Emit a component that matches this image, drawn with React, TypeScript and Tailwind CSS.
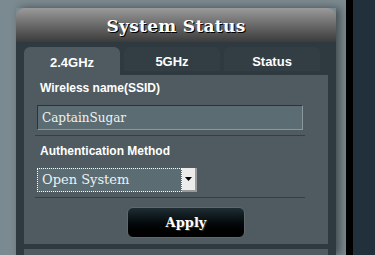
export default function App() {
  const serif = { fontFamily: '"DejaVu Serif", "Liberation Serif", serif' };
  return (
    <div className="flex h-[255px] w-[375px] overflow-hidden bg-[#7b8a90]" style={{ fontFamily: '"Liberation Sans", Arial, sans-serif' }}>
      <div className="w-[346px] shrink-0 pl-[16px] pt-[8px]">
        <div className="w-[320px] shadow-[4px_0_8px_rgba(0,0,0,0.45)]">
          {/* header */}
          <div className="flex h-[34px] items-center justify-center rounded-t-[9px] bg-gradient-to-b from-[#9b9b9b] to-[#3c3c3c] pt-[3px]">
            <span className="text-[17px] font-bold tracking-[0.3px] text-white [text-shadow:1px_1px_0_#000]" style={serif}>
              System Status
            </span>
          </div>
          {/* body */}
          <div className="h-[213px] bg-[#2e3a3f] px-[8px] pt-[5px]">
            <div className="flex gap-[4px]">
              <div className="flex h-[28px] w-[96px] items-center justify-center rounded-t-[6px] bg-[#4f5b60] pt-[3px] text-[13px] font-bold text-white">
                2.4GHz
              </div>
              <div className="flex h-[24px] w-[96px] items-center justify-center rounded-t-[6px] bg-[#323e44] pt-[6px] text-[13px] font-bold text-white">
                5GHz
              </div>
              <div className="flex h-[24px] w-[96px] items-center justify-center rounded-t-[6px] bg-[#323e44] pt-[6px] text-[13px] font-bold text-white">
                Status
              </div>
            </div>
            <div className="h-[169px] bg-[#4f5b60] px-[11px] pt-[6px]">
              <div className="pl-[5px] text-[12px] font-bold leading-[15px] text-white">Wireless name(SSID)</div>
              <div className="mt-[9px] px-[2px]">
                <div className="flex h-[25px] w-[266px] items-center border border-t-[#2b3538] border-l-[#2b3538] border-r-[#8a989c] border-b-[#8a989c] bg-[#5b6d73] pl-[4px] text-[12px] text-[#eef2f3]" style={serif}>
                  CaptainSugar
                </div>
              </div>
              <div className="mt-[5px] h-[2px] w-[270px] border-t border-[#353f43] border-b-[#5d686c]" />
              <div className="mt-[7px] pl-[5px] text-[12px] font-bold leading-[15px] text-white">Authentication Method</div>
              <div className="mt-[9px] px-[2px]">
                <div className="flex h-[24px] w-[160px]">
                  <div className="flex flex-1 items-center border border-dotted border-white bg-[#5b6d73] pl-[4px] text-[13px] text-[#eef2f3]" style={serif}>
                    Open System
                  </div>
                  <div className="flex w-[15px] items-center justify-center border-r-2 border-b-2 border-r-[#9a9a9a] border-b-[#9a9a9a] bg-[#ececec]">
                    <svg width="7" height="4" viewBox="0 0 7 4"><path d="M0 0h7L3.5 4z" fill="#000" /></svg>
                  </div>
                </div>
              </div>
              <div className="mt-[5px] h-[2px] w-[270px] border-t border-[#353f43] border-b-[#5d686c]" />
              <div className="ml-[92px] mt-[8px] flex h-[31px] w-[118px] items-center justify-center rounded-[6px] border border-[#5e696e] bg-gradient-to-b from-[#1f2e34] to-[#000] text-[13px] font-bold text-white [text-shadow:1px_1px_0_#333]" style={serif}>
                Apply
              </div>
            </div>
            <div className="mt-[5px] h-[20px] bg-[#4f5b60]" />
          </div>
        </div>
      </div>
      <div className="w-[7px] shrink-0 bg-black" />
      <div className="flex-1 bg-[#21303b]" />
    </div>
  );
}
